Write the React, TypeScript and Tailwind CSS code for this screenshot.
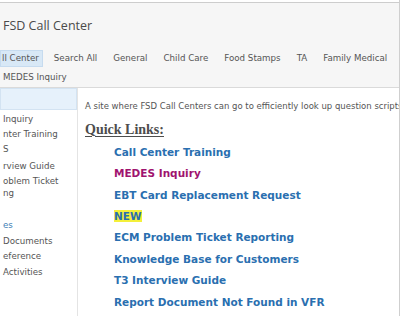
export default function App() {
  const tabs = ['Search All', 'General', 'Child Care', 'Food Stamps', 'TA', 'Family Medical'];
  const links = [
    { label: 'Call Center Training', cls: 'text-[#2a6fb0]' },
    { label: 'MEDES Inquiry', cls: 'text-[#a0136f]' },
    { label: 'EBT Card Replacement Request', cls: 'text-[#2a6fb0]' },
    { label: 'NEW', cls: 'text-[#2a6fb0] bg-[#f4f03a]' },
    { label: 'ECM Problem Ticket Reporting', cls: 'text-[#2a6fb0]' },
    { label: 'Knowledge Base for Customers', cls: 'text-[#2a6fb0]' },
    { label: 'T3 Interview Guide', cls: 'text-[#2a6fb0]' },
    { label: 'Report Document Not Found in VFR', cls: 'text-[#2a6fb0]' },
  ];

  return (
    <div className="w-[400px] h-[316px] overflow-hidden bg-white border-r border-[#cfcfcf] font-['DejaVu_Sans',sans-serif]">
      <div className="h-[2px] bg-white" />
      <div className="h-[86px] bg-[#f6f6f6] border-t border-[#cdcdcd] border-b border-b-[#dadada] flex flex-col">
        <div className="h-[46px] flex items-center pl-[3px] pt-[1px] text-[12.5px] text-[#4a4a4a] font-['Open_Sans',sans-serif]">
          FSD Call Center
        </div>
        <div className="flex items-stretch h-[17px] mt-[1px] text-[8.7px] text-[#555] whitespace-nowrap">
          <div className="bg-[#d8e8f6] pl-[1px] pr-[3px] flex items-center border border-[#c6dbef]">ll Center</div>
          <div className="flex items-center gap-[16px] pl-[11px]">
            {tabs.map((t) => (
              <span key={t}>{t}</span>
            ))}
          </div>
        </div>
        <div className="h-[16px] flex items-center pl-[3px] mt-[3px] text-[8.7px] text-[#555]">MEDES Inquiry</div>
      </div>
      <div className="flex h-[228px]">
        <div className="w-[78px] shrink-0 border-r border-[#e4e4e4] text-[8.7px] text-[#555] whitespace-nowrap">
          <div className="h-[22px] bg-[#e6f1fb] border border-[#d3e3f2]" />
          <div className="flex flex-col pl-[3px] pt-[2px] leading-[15px]">
            <span>Inquiry</span>
            <span>nter Training</span>
            <span>S</span>
            <span className="mt-[2px]">rview Guide</span>
            <span className="mt-[1px] leading-[12px]">oblem Ticket</span>
            <span className="leading-[12px]">ng</span>
            <span className="mt-[19px] text-[#3f7fb6]">es</span>
            <span className="mt-[1px]">Documents</span>
            <span>eference</span>
            <span className="mt-[1px]">Activities</span>
          </div>
        </div>
        <div className="flex-1 min-w-0 pl-[7px]">
          <div className="mt-[12px] text-[8.5px] text-[#555] whitespace-nowrap">
            A site where FSD Call Centers can go to efficiently look up question scripts
          </div>
          <div className="mt-[6px] text-[14px] font-bold underline underline-offset-2 text-[#4d4d4d] font-['Liberation_Serif',serif]">
            Quick Links:
          </div>
          <div className="mt-[6px] pl-[29px] flex flex-col gap-[8px] text-[10.5px] font-bold leading-[13.4px] whitespace-nowrap">
            {links.map((l) => (
              <div key={l.label}>
                <span className={l.cls}>{l.label}</span>
              </div>
            ))}
          </div>
        </div>
      </div>
    </div>
  );
}
